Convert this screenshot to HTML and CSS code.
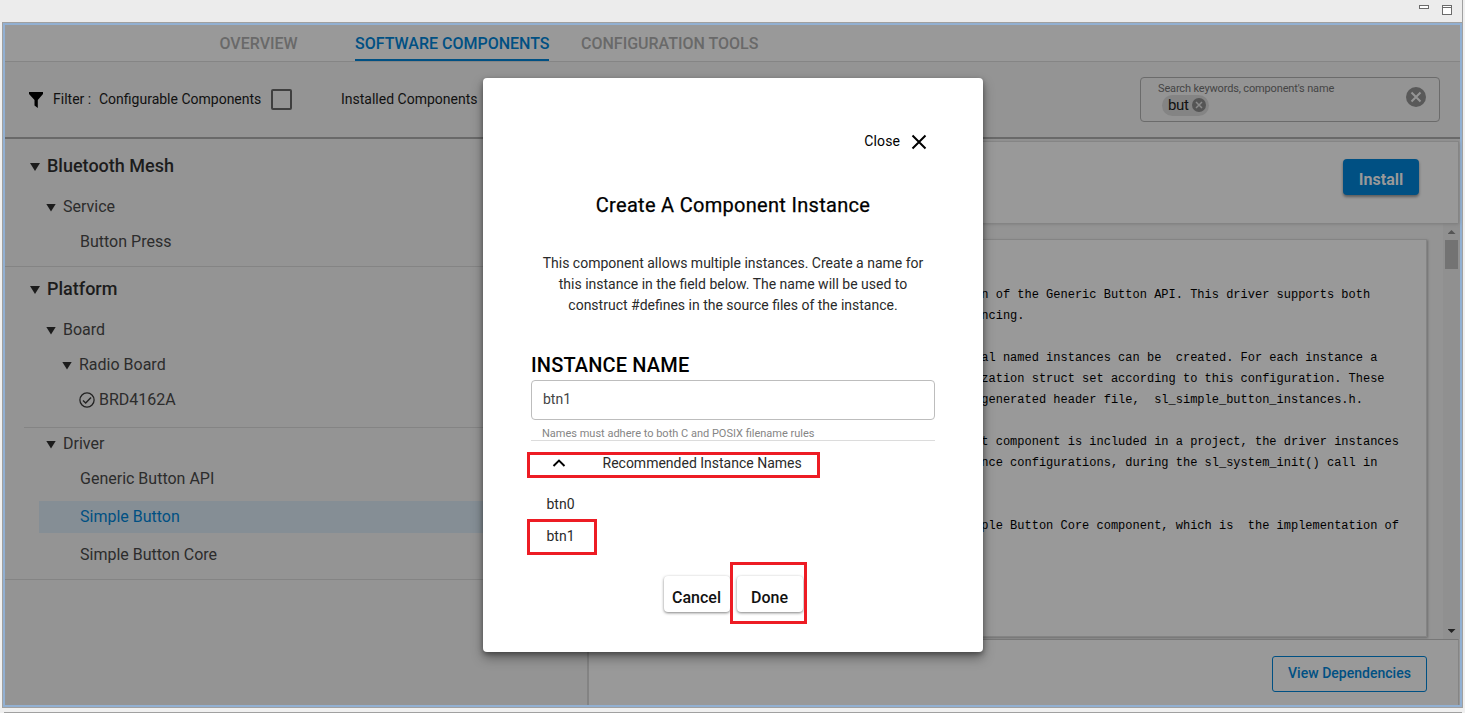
FILE: index.html
```html
<!DOCTYPE html>
<html lang="en">
<head>
<meta charset="utf-8">
<title>Software Components</title>
<link rel="stylesheet" href="styles.css">
</head>
<body>
<div class="titlebar">
  <svg class="win-icon" width="40" height="16" viewBox="0 0 40 16"><rect x="2.500" y="2.500" width="9" height="3" fill="#fff" stroke="#6b6b6b"/><rect x="25.500" y="2.500" width="9" height="9" fill="#fff" stroke="#6b6b6b"/><path d="M25 4.500h10" stroke="#6b6b6b"/></svg>
</div>
<div class="frame">
  <nav class="tabs">
    <span class="tab">OVERVIEW</span>
    <span class="tab active">SOFTWARE COMPONENTS</span>
    <span class="tab">CONFIGURATION TOOLS</span>
  </nav>
  <div class="filters">
    <svg class="funnel" width="16" height="18" viewBox="0 0 16 18"><path d="M1 1h14v2l-5.200 6v8L6.500 14.500V9L1 3z" fill="#000"/></svg>
    <span class="f-label">Filter :</span>
    <span class="f-config">Configurable Components</span>
    <span class="check"></span>
    <span class="f-inst">Installed Components</span>
    <div class="search">
      <div class="search-text">
        <span class="search-label">Search keywords, component's name</span>
        <span class="chip">but<svg width="14" height="14" viewBox="0 0 14 14"><circle cx="7" cy="7" r="7" fill="#555"/><path d="M4 4l6 6M10 4l-6 6" stroke="#8a8a8a" stroke-width="1.500"/></svg></span>
      </div>
      <svg class="clear" width="20" height="20" viewBox="0 0 20 20"><circle cx="10" cy="10" r="10" fill="#595959"/><path d="M5.500 5.500l9 9M14.500 5.500l-9 9" stroke="#959595" stroke-width="2"/></svg>
    </div>
  </div>
  <div class="body">
    <aside class="tree">
      <section class="group mesh">
        <div class="row head l0"><i class="arrow"></i>Bluetooth Mesh</div>
        <div class="row service l1"><i class="arrow"></i>Service</div>
        <div class="row press leaf">Button Press</div>
      </section>
      <section class="group">
        <div class="row head platform l0"><i class="arrow"></i>Platform</div>
        <div class="row board l1"><i class="arrow"></i>Board</div>
        <div class="row radio l2"><i class="arrow"></i>Radio Board</div>
        <div class="row brd leaf"><svg width="16" height="16" viewBox="0 0 16 16"><circle cx="8" cy="8" r="7.100" fill="none" stroke="#222" stroke-width="1.300"/><path d="M4 8.500l2.700 2.600L12 5.400" fill="none" stroke="#222" stroke-width="1.400"/></svg>BRD4162A</div>
        <div class="rule"></div>
        <div class="row driver l1"><i class="arrow"></i>Driver</div>
        <div class="row generic leaf">Generic Button API</div>
        <div class="row selected">Simple Button</div>
        <div class="row core leaf">Simple Button Core</div>
      </section>
    </aside>
    <main class="detail">
      <header class="detail-head"><button class="install">Install</button></header>
      <div class="scroll">
        <pre class="card">n of the Generic Button API. This driver supports both
ncing.

al named instances can be  created. For each instance a
zation struct set according to this configuration. These
generated header file,  sl_simple_button_instances.h.

t component is included in a project, the driver instances
nce configurations, during the sl_system_init() call in


ple Button Core component, which is  the implementation of</pre>
        <div class="scrollbar"><i class="up"></i><i class="thumb"></i><i class="down"></i></div>
      </div>
      <footer class="detail-foot"><button class="deps">View Dependencies</button></footer>
    </main>
  </div>
</div>
<div class="status"></div>

<div class="modal">
  <div class="close">Close<svg width="16" height="16" viewBox="0 0 16 16"><path d="M1.500 1.500l13 13M14.500 1.500l-13 13" stroke="#000" stroke-width="2"/></svg></div>
  <h2>Create A Component Instance</h2>
  <p>This component allows multiple instances. Create a name for<br>this instance in the field below. The name will be used to<br>construct #defines in the source files of the instance.</p>
  <h3>INSTANCE NAME</h3>
  <div class="input">btn1</div>
  <div class="hint">Names must adhere to both C and POSIX filename rules</div>
  <div class="recommended"><svg width="14" height="10" viewBox="0 0 14 10"><path d="M1.500 8L7 2.600 12.500 8" fill="none" stroke="#000" stroke-width="2"/></svg><span>Recommended Instance Names</span></div>
  <div class="option">btn0</div>
  <div class="option">btn1</div>
  <div class="actions"><button>Cancel</button><button class="done">Done</button></div>
  <i class="mark mark-names"></i>
  <i class="mark mark-option"></i>
  <i class="mark mark-done"></i>
</div>
</body>
</html>
```
FILE: styles.css
```css
* { box-sizing: border-box; }
body { margin: 0; width: 1465px; height: 713px; overflow: hidden; position: relative; background: #f0f0f0; font-family: Roboto, "Liberation Sans", sans-serif; display: flex; flex-direction: column; }
button { font-family: inherit; border: 0; padding: 0; margin: 0; }

.titlebar { height: 22px; flex: none; background: #ececec; width: 1463px; border-right: 1px solid #a0a0a0; display: flex; justify-content: flex-end; padding: 3px 5px 0 0; }
.frame { flex: none; height: 686px; width: 1461px; margin-left: 2px; border: 1px solid #a0a0a0; box-shadow: inset 0 0 0 2px #92b0d2; padding: 2px; display: flex; flex-direction: column; }
.status { margin: 4px 3px 0 4px; height: 1px; background: #a0a0a0; }

.tabs { height: 37px; flex: none; background: #999; border-bottom: 1px solid #858585; display: flex; padding-left: 214.500px; font-size: 16px; font-weight: 500; line-height: 38px; color: #696969; }
.tab { height: 36px; white-space: nowrap; margin-right: 32px; }
.tab:first-child { width: 78px; margin-right: 57.500px; }
.tab.active { width: 194px; color: #005083; border-bottom: 2px solid #005083; }

.filters { height: 77px; flex: none; background: #949494; border-bottom: 2px solid #696969; display: flex; align-items: center; padding: 0 20px 0 23px; font-size: 14px; color: #111; white-space: nowrap; }
.f-label { margin-left: 9px; width: 46px; }
.f-config { width: 163px; }
.f-label, .f-config, .f-inst { padding-bottom: 2px; }
.check { width: 21px; height: 21px; border: 2px solid #3f3f3f; border-radius: 2px; margin-left: 9px; }
.f-inst { margin-left: 49px; }
.search { margin-left: auto; width: 300px; height: 45px; border: 1px solid #6b6b6b; border-radius: 4px; display: flex; justify-content: space-between; padding: 4px 13px 0 17px; }
.search-text { display: flex; flex-direction: column; align-items: flex-start; }
.search-label { font-size: 11px; line-height: 13px; color: #454545; letter-spacing: -.15px; }
.chip { display: flex; align-items: center; gap: 3px; height: 21px; margin-left: 4px; padding: 0 3px 1px 6px; border-radius: 11px; background: #848484; font-size: 15px; letter-spacing: -.3px; color: #111; }
.clear { margin-top: 5px; }

.body { flex: 1; min-height: 0; display: flex; background: #949494; }
.tree { width: 584px; flex: none; border-right: 2px solid #838383; color: #2c2c2c; }
.group { border-bottom: 1px solid #848484; padding-bottom: 4px; }
.mesh { padding: 7px 0 11px; }
.row { display: flex; align-items: center; font-size: 16px; white-space: nowrap; }
.head { font-size: 18px; font-weight: 500; height: 39px; color: #1c1c1c; }
.arrow { width: 10px; height: 8px; background: #1c1c1c; clip-path: polygon(0 0, 100% 0, 50% 100%); margin: 3px 7px 0 0; flex: none; }
.l0 { padding-left: 25px; }
.l1 { padding-left: 41px; }
.l2 { padding-left: 57px; }
.leaf { padding-left: 75px; }
.service { height: 42px; }
.press { height: 28px; }
.platform { height: 43px; }
.board { height: 38px; }
.radio { height: 32px; }
.brd { height: 38px; padding-left: 74px; gap: 4px; }
.brd svg { margin-top: 1px; }
.rule { height: 1px; margin: 9px 0 0 19px; background: #848484; }
.driver { height: 30px; }
.generic { height: 40px; }
.selected { height: 32px; margin: 3px 0 0 34px; padding: 0 0 1px 41px; background: #858e95; color: #005083; }
.core { height: 42px; }

.detail { flex: 1; min-width: 0; display: flex; flex-direction: column; }
.detail-head { height: 82px; margin: 2px 1px 0 0; flex: none; background: #999; border-top: 1px solid #858585; border-right: 1px solid #858585; box-shadow: 0 1px 3px #7a7a7a; display: flex; justify-content: flex-end; padding: 17px 39px 0 0; position: relative; }
.install { width: 76px; height: 36px; border-radius: 4px; background: #005083; color: #999; font-size: 16px; font-weight: 700; padding-top: 5px; box-shadow: 0 2px 3px rgba(0,0,0,.4); }
.scroll { flex: 1; display: flex; min-height: 0; padding-top: 16px; justify-content: space-between; }
.card { margin: 0 0 2px 20px; width: 818px; background: #999; border: 1px solid #848484; box-shadow: 1px 1px 2px #6f6f6f; padding: 45px 0 0 371.300px; font: 12px/21px "Liberation Mono", monospace; color: #000; overflow: hidden; }
.scrollbar { width: 17px; margin-top: -16px; background: #909090; display: flex; flex-direction: column; align-items: center; padding: 7px 0 6px; }
.up { width: 8px; height: 4px; background: #555; clip-path: polygon(50% 0, 100% 100%, 0 100%); }
.thumb { width: 13px; height: 29px; margin-top: 6px; background: #737373; }
.down { width: 8px; height: 4px; margin-top: auto; background: #222; clip-path: polygon(0 0, 100% 0, 50% 100%); }
.detail-foot { height: 66px; flex: none; margin-right: 1px; background: #999; border-top: 1px solid #777; border-right: 1px solid #858585; display: flex; justify-content: flex-end; padding: 16px 31px 0 0; }
.deps { width: 155px; height: 36px; border: 1px solid #005083; border-radius: 3px; background: none; color: #005083; font-size: 14px; font-weight: 500; padding-bottom: 2px; letter-spacing: .02px; }

.modal { position: absolute; left: 483px; top: 78px; width: 500px; height: 574px; background: #fff; border-radius: 4px; box-shadow: 0 6px 12px rgba(0,0,0,.35), 0 2px 5px rgba(0,0,0,.35); padding: 52px 48px 0; display: flex; flex-direction: column; color: #2a2a2a; }
.close { display: flex; align-items: center; justify-content: flex-end; gap: 11px; height: 21px; padding-right: 8px; font-size: 14px; color: #000; letter-spacing: .1px; }
.close svg { margin-top: 2px; }
.modal h2 { margin: 42px 0 0; font-size: 20px; line-height: 24px; font-weight: 400; -webkit-text-stroke: .25px #000; letter-spacing: .3px; text-align: center; color: #000; }
.modal p { margin: 36px 0 0; font-size: 14px; line-height: 21px; text-align: center; white-space: nowrap; }
.modal h3 { margin: 37px 0 0; font-size: 20px; line-height: 24px; font-weight: 500; letter-spacing: .15px; color: #000; }
.input { margin-top: 3px; height: 40px; border: 1px solid #bdbdbd; border-radius: 4px; padding: 0 11px; font-size: 14px; line-height: 37px; color: #444; }
.hint { height: 21px; border-bottom: 1px solid #dcdcdc; padding: 6px 11px 0; font-size: 11px; line-height: 15px; color: #858585; }
.recommended { height: 47px; padding: 14px 0 0 21px; display: flex; align-items: flex-start; font-size: 14px; line-height: 16px; }
.recommended svg { margin: 3px 36.500px 0 0; }
.option { height: 32px; padding-left: 15.500px; font-size: 14px; line-height: 33px; }
.actions { margin-top: 24px; display: flex; justify-content: center; gap: 7px; }
.actions button { width: 66px; height: 36px; border-radius: 4px; background: #fff; box-shadow: 0 1px 3px rgba(0,0,0,.5); font-size: 16px; font-weight: 500; color: #111; padding-top: 7px; }
.mark { position: absolute; border: 3px solid #ed1c24; }
.mark-names { left: 44px; top: 374px; width: 293px; height: 26px; }
.mark-option { left: 44px; top: 441px; width: 70px; height: 36px; }
.mark-done { left: 247px; top: 484px; width: 77px; height: 62px; }
```
